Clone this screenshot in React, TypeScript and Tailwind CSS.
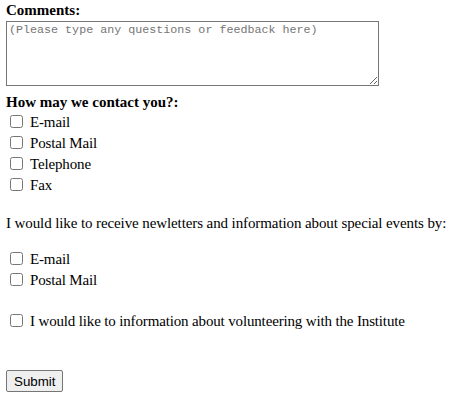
const contactOptions = ["E-mail", "Postal Mail", "Telephone", "Fax"];
const newsletterOptions = ["E-mail", "Postal Mail"];

function CheckRow({ label }: { label: string }) {
  return (
    <label className="flex items-center h-[21px]">
      <input type="checkbox" className="ml-[4px] mr-[7px] w-[13px] h-[13px]" />
      <span className="tracking-[-0.15px]">{label}</span>
    </label>
  );
}

export default function App() {
  return (
    <div className="bg-white min-h-[407px] pl-[6px] pt-[1px] text-black text-[15px] leading-[18px] font-['Liberation_Serif',serif]">
      <form onSubmit={(e) => e.preventDefault()}>
        <div className="font-bold">Comments:</div>
        <textarea
          className="block mt-[2px] w-[373px] h-[65px] border border-[#767676] px-[2px] py-[1px] resize-y font-['Liberation_Mono',monospace] text-[11.7px] leading-[14px] placeholder:text-[#757575]"
          placeholder="(Please type any questions or feedback here)"
        />
        <div className="mt-[7px] font-bold">How may we contact you?:</div>
        {contactOptions.map((opt) => (
          <CheckRow key={opt} label={opt} />
        ))}
        <p className="mt-[19px] mb-[16px] tracking-[-0.1px]">
          I would like to receive newletters and information about special events by:
        </p>
        {newsletterOptions.map((opt) => (
          <CheckRow key={opt} label={opt} />
        ))}
        <div className="mt-[20px]">
          <CheckRow label="I would like to information about volunteering with the Institute" />
        </div>
        <button
          type="submit"
          className="mt-[39px] block h-[22px] px-[7px] bg-[#efefef] border border-[#767676] rounded-[2px] font-['Liberation_Sans',sans-serif] text-[13.33px] leading-[15px]"
        >
          Submit
        </button>
      </form>
    </div>
  );
}
